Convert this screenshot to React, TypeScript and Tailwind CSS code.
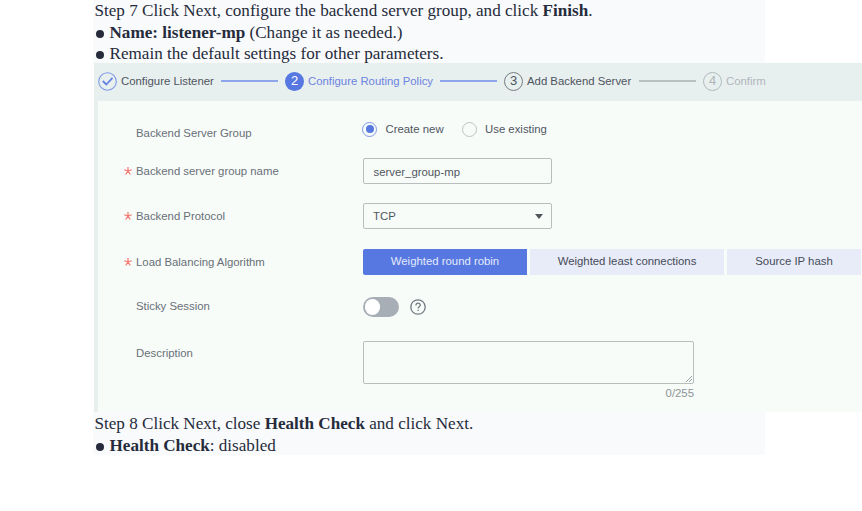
import type { ReactNode } from "react";

function Line({ children, className = "" }: { children: ReactNode; className?: string }) {
  return <p className={`flex items-center whitespace-pre pl-[1.5px] ${className}`}>{children}</p>;
}

function Bullet() {
  return <span className="mr-[6px] ml-px mt-[2px] h-[8px] w-[8px] shrink-0 rounded-full bg-[#252b3a]" />;
}

function Row({ label, required = false, className = "", children }: { label: string; required?: boolean; className?: string; children: ReactNode }) {
  return (
    <div className={`flex ${className}`}>
      <div className="flex h-[26px] w-[239px] shrink-0 items-center text-[#696f78]">
        <span className="flex w-[12px] text-[#f5736b]">
          {required && (
            <svg width="8" height="8" viewBox="0 0 8 8" stroke="currentColor" strokeWidth="1.2" fill="none">
              <path d="M4 0v4M0.3 2.8L4 4M7.7 2.8L4 4M1.7 7.5L4 4M6.3 7.5L4 4" />
            </svg>
          )}
        </span>
        <span className="pt-[2px]">{label}</span>
      </div>
      {children}
    </div>
  );
}

export default function App() {
  return (
    <main className="h-[511px] w-[862px] overflow-hidden bg-white pl-[93px]">
      <section className="h-[63px] w-[672px] bg-[#f9fafc] font-['Liberation_Serif',serif] text-[17.13px] text-[#252b3a]">
        <Line className="h-[22px]">Step 7 Click Next, configure the backend server group, and click <b>Finish</b>.</Line>
        <Line className="h-[21px]"><Bullet /><b>Name: listener-mp</b> (Change it as needed.)</Line>
        <Line className="h-[21px]"><Bullet />Remain the default settings for other parameters.</Line>
      </section>

      <section className="ml-px h-[348.5px] bg-[#e8efef] font-['Liberation_Sans',sans-serif] text-[11.37px] whitespace-nowrap">
        <nav className="flex h-[38px] items-center pb-[2px] pl-[4px] text-[#4d545e]">
          <svg className="shrink-0" width="19" height="19" viewBox="0 0 19 19" fill="none">
            <circle cx="9.5" cy="9.5" r="8.8" stroke="#7f97e6" strokeWidth="1.1" />
            <path d="M4.8 9l3.5 3.5 6.2-6.6" stroke="#6583e2" strokeWidth="1.8" />
          </svg>
          <span className="ml-[4px] w-[93px] pt-px">Configure Listener</span>
          <i className="ml-[7px] h-[1.5px] w-[57px] bg-[#8fa5ea]" />
          <span className="ml-[7px] flex h-[19px] w-[19px] items-center justify-center rounded-full bg-[#5678e0] text-[13px] text-white">2</span>
          <span className="ml-[4px] w-[125px] pt-px text-[#6b84df]">Configure Routing Policy</span>
          <i className="ml-[7px] h-[1.5px] w-[57px] bg-[#8fa5ea]" />
          <span className="ml-[7px] flex h-[19px] w-[19px] items-center justify-center rounded-full border border-[#777d82] text-[13px]">3</span>
          <span className="ml-[4px] w-[105px] pt-px">Add Backend Server</span>
          <i className="ml-[7px] h-[1.5px] w-[57px] bg-[#b9c1c2]" />
          <span className="ml-[7px] flex h-[19px] w-[19px] items-center justify-center rounded-full border border-[#b3babd] text-[13px] text-[#afb6ba]">4</span>
          <span className="ml-[4px] pt-px text-[#b0b7bc]">Confirm</span>
        </nav>

        <div className="ml-[4px] h-[310.5px] bg-[#f7fcf9] pl-[26px] pt-[19px] text-[#50565f]">
          <Row label="Backend Server Group">
            <div className="-mt-[4px] flex h-[26px] items-center">
              <span className="-ml-px flex h-[15px] w-[15px] items-center justify-center rounded-full border border-[#7f97e6]">
                <i className="h-[8px] w-[8px] rounded-full bg-[#5678e0]" />
              </span>
              <span className="ml-[8.5px] w-[58px] pt-px">Create new</span>
              <i className="ml-[18.5px] h-[15px] w-[15px] rounded-full border border-[#bfc3c3]" />
              <span className="ml-[8px] pt-px">Use existing</span>
            </div>
          </Row>
          <Row label="Backend server group name" required className="mt-[12px]">
            <div className="flex h-[26px] w-[189px] items-center rounded-[2px] border border-[#b8bdbe] pl-[9.5px] pt-[3px]">server_group-mp</div>
          </Row>
          <Row label="Backend Protocol" required className="mt-[19px]">
            <div className="flex h-[26px] w-[189px] items-center justify-between rounded-[2px] border border-[#b8bdbe] pl-[9px] pr-[8px]">
              <span className="pt-[2px]">TCP</span>
              <svg width="8" height="5" viewBox="0 0 8 5"><path d="M0 0h8L4 5z" fill="#4f5559" /></svg>
            </div>
          </Row>
          <Row label="Load Balancing Algorithm" required className="mt-[20px]">
            <div className="flex h-[26px] gap-[3px] text-[#454b59]">
              <span className="flex w-[164px] items-center justify-center rounded-l-[2px] bg-[#5678e0] text-[#e4eafc]">Weighted round robin</span>
              <span className="flex w-[194px] items-center justify-center bg-[#e8ebf8]">Weighted least connections</span>
              <span className="flex w-[134px] items-center justify-center bg-[#e8ebf8]">Source IP hash</span>
            </div>
          </Row>
          <Row label="Sticky Session" className="mt-[18px]">
            <div className="flex h-[26px] items-center pt-px">
              <span className="flex h-[20px] w-[36px] items-center rounded-full bg-[#a8aeb5] pl-[2px]">
                <i className="h-[16px] w-[15px] rounded-full bg-white" />
              </span>
              <svg className="ml-[11px]" width="16" height="16" viewBox="0 0 16 16" fill="none" stroke="#747a80">
                <circle cx="8" cy="8" r="7.2" strokeWidth="1.3" />
                <path d="M5.9 6.4C5.9 5 6.8 4.2 8 4.2s2.2.8 2.2 2c0 1.5-2.1 1.7-2.1 3.4M8.1 10.8v1.3" strokeWidth="1.3" />
              </svg>
            </div>
          </Row>
          <Row label="Description" className="mt-[21px]">
            <div className="mt-px w-[331px] text-[#8e9497]">
              <div className="flex h-[43px] items-end justify-end rounded-[2px] border border-[#b8bdbe] p-px">
                <svg width="6" height="6" viewBox="0 0 6 6" stroke="#9da2a5" fill="none"><path d="M0 6L6 0M3 6l3-3" /></svg>
              </div>
              <p className="h-[20px] text-right leading-[19px]">0/255</p>
            </div>
          </Row>
        </div>
      </section>

      <section className="h-[43px] w-[672px] bg-[#f9fafc] pt-[2px] font-['Liberation_Serif',serif] text-[17.13px] text-[#252b3a]">
        <Line className="h-[21px]">Step 8 Click Next, close <b>Health Check</b> and click Next.</Line>
        <Line className="h-[22px]"><Bullet /><b>Health Check</b>: disabled</Line>
      </section>
    </main>
  );
}
